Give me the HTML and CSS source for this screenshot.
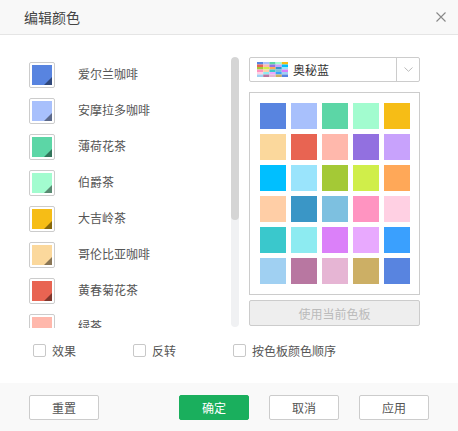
FILE: index.html
```html
<!DOCTYPE html>
<html lang="zh">
<head>
<meta charset="utf-8">
<title>编辑颜色</title>
<link rel="stylesheet" href="styles.css">
</head>
<body>
<div class="dialog">
  <div class="header">
    <span class="title">编辑颜色</span>
    <svg class="close" width="10" height="10" viewBox="0 0 10 10"><path d="M0.5 0.5L9.5 9.5M9.5 0.5L0.5 9.5" stroke="#888" stroke-width="1.1" fill="none"/></svg>
  </div>
  <div class="main">
    <div class="left">
      <div class="list">
        <div class="item"><span class="sw"><span class="fill c1"></span></span><span class="label">爱尔兰咖啡</span></div>
        <div class="item"><span class="sw"><span class="fill c2"></span></span><span class="label">安摩拉多咖啡</span></div>
        <div class="item"><span class="sw"><span class="fill c3"></span></span><span class="label">薄荷花茶</span></div>
        <div class="item"><span class="sw"><span class="fill c4"></span></span><span class="label">伯爵茶</span></div>
        <div class="item"><span class="sw"><span class="fill c5"></span></span><span class="label">大吉岭茶</span></div>
        <div class="item"><span class="sw"><span class="fill c6"></span></span><span class="label">哥伦比亚咖啡</span></div>
        <div class="item"><span class="sw"><span class="fill c7"></span></span><span class="label">黄春菊花茶</span></div>
        <div class="item"><span class="sw"><span class="fill c8"></span></span><span class="label">绿茶</span></div>
      </div>
      <div class="scrollbar"><div class="thumb"></div></div>
    </div>
    <div class="right">
      <div class="select">
        <div class="select-value">
          <svg class="pal" width="31" height="15" viewBox="0 0 30 15" preserveAspectRatio="none">
            <rect x="0" y="0" width="6" height="2.5" fill="#5884E0"/><rect x="6" y="0" width="6" height="2.5" fill="#A8C0FC"/><rect x="12" y="0" width="6" height="2.5" fill="#5CD6A6"/><rect x="18" y="0" width="6" height="2.5" fill="#A2FCCF"/><rect x="24" y="0" width="6" height="2.5" fill="#F6BD16"/>
            <rect x="0" y="2.5" width="6" height="2.5" fill="#E86452"/><rect x="6" y="2.5" width="6" height="2.5" fill="#FFB8AC"/><rect x="12" y="2.5" width="6" height="2.5" fill="#9270E0"/><rect x="18" y="2.5" width="6" height="2.5" fill="#C8A2FC"/><rect x="24" y="2.5" width="6" height="2.5" fill="#00BFFF"/>
            <rect x="0" y="5" width="6" height="2.5" fill="#A4C936"/><rect x="6" y="5" width="6" height="2.5" fill="#D0EE4A"/><rect x="12" y="5" width="6" height="2.5" fill="#FFA858"/><rect x="18" y="5" width="6" height="2.5" fill="#3A96C6"/><rect x="24" y="5" width="6" height="2.5" fill="#9AE4FC"/>
            <rect x="0" y="7.5" width="6" height="2.5" fill="#FF94C1"/><rect x="6" y="7.5" width="6" height="2.5" fill="#FFCEA6"/><rect x="12" y="7.5" width="6" height="2.5" fill="#3AC8CC"/><rect x="18" y="7.5" width="6" height="2.5" fill="#7DC0E0"/><rect x="24" y="7.5" width="6" height="2.5" fill="#DB80F9"/>
            <rect x="0" y="10" width="6" height="2.5" fill="#FFD0E3"/><rect x="6" y="10" width="6" height="2.5" fill="#8DEBF1"/><rect x="12" y="10" width="6" height="2.5" fill="#E8A9FE"/><rect x="18" y="10" width="6" height="2.5" fill="#3AA0FE"/><rect x="24" y="10" width="6" height="2.5" fill="#A0D0F2"/>
            <rect x="0" y="12.5" width="6" height="2.5" fill="#A0D0F2"/><rect x="6" y="12.5" width="6" height="2.5" fill="#B877A1"/><rect x="12" y="12.5" width="6" height="2.5" fill="#E6B5D4"/><rect x="18" y="12.5" width="6" height="2.5" fill="#CCAF65"/><rect x="24" y="12.5" width="6" height="2.5" fill="#5884E0"/>
          </svg>
          <span class="select-text">奥秘蓝</span>
        </div>
        <div class="select-arrow">
          <svg width="9" height="5" viewBox="0 0 9 5"><path d="M0.5 0.5L4.5 4.3L8.5 0.5" stroke="#bbb" stroke-width="1" fill="none"/></svg>
        </div>
      </div>
      <div class="grid">
        <span class="cell" style="background:#5884E0"></span>
        <span class="cell" style="background:#A8C0FC"></span>
        <span class="cell" style="background:#5CD6A6"></span>
        <span class="cell" style="background:#A2FCCF"></span>
        <span class="cell" style="background:#F6BD16"></span>
        <span class="cell" style="background:#FBD89C"></span>
        <span class="cell" style="background:#E86452"></span>
        <span class="cell" style="background:#FFB8AC"></span>
        <span class="cell" style="background:#9270E0"></span>
        <span class="cell" style="background:#C8A2FC"></span>
        <span class="cell" style="background:#00BFFF"></span>
        <span class="cell" style="background:#9AE4FC"></span>
        <span class="cell" style="background:#A4C936"></span>
        <span class="cell" style="background:#D0EE4A"></span>
        <span class="cell" style="background:#FFA858"></span>
        <span class="cell" style="background:#FFCEA6"></span>
        <span class="cell" style="background:#3A96C6"></span>
        <span class="cell" style="background:#7DC0E0"></span>
        <span class="cell" style="background:#FF94C1"></span>
        <span class="cell" style="background:#FFD0E3"></span>
        <span class="cell" style="background:#3AC8CC"></span>
        <span class="cell" style="background:#8DEBF1"></span>
        <span class="cell" style="background:#DB80F9"></span>
        <span class="cell" style="background:#E8A9FE"></span>
        <span class="cell" style="background:#3AA0FE"></span>
        <span class="cell" style="background:#A0D0F2"></span>
        <span class="cell" style="background:#B877A1"></span>
        <span class="cell" style="background:#E6B5D4"></span>
        <span class="cell" style="background:#CCAF65"></span>
        <span class="cell" style="background:#5884E0"></span>
      </div>
      <button class="use-btn" disabled>使用当前色板</button>
    </div>
  </div>
  <div class="options">
    <label class="opt"><span class="cb"></span><span>效果</span></label>
    <label class="opt"><span class="cb"></span><span>反转</span></label>
    <label class="opt"><span class="cb"></span><span>按色板颜色顺序</span></label>
  </div>
  <div class="footer">
    <button class="btn">重置</button>
    <div class="footer-right">
      <button class="btn primary">确定</button>
      <button class="btn">取消</button>
      <button class="btn">应用</button>
    </div>
  </div>
</div>
</body>
</html>
```

FILE: styles.css
```css
* { box-sizing: border-box; }
html, body { margin: 0; padding: 0; background: #fff; }
body {
  font-family: "Noto Sans CJK SC", "Liberation Sans", sans-serif;
  font-size: 12px;
  color: #555;
}
.dialog {
  width: 458px;
  height: 431px;
  display: flex;
  flex-direction: column;
  background: #fff;
}
.header {
  height: 35px;
  flex: none;
  background: #f8f8f8;
  border-bottom: 1px solid #e5e5e5;
  display: flex;
  align-items: center;
  justify-content: space-between;
  padding: 0 12px 0 24px;
}
.title { font-size: 14px; color: #444; line-height: 1; margin-top: -1px; }
.close { display: block; margin-top: -1px; }

.main {
  display: flex;
  padding: 21px 38px 0 29px;
  height: 293px;
  flex: none;
}
.left { display: flex; width: 210px; height: 272px; }
.list {
  width: 202px;
  height: 272px;
  overflow: hidden;
}
.item {
  height: 36px;
  display: flex;
  align-items: center;
}
.sw {
  width: 26px;
  height: 26px;
  border: 1px solid #ccc;
  border-radius: 2px;
  padding: 2px;
  background: #fff;
  flex: none;
  margin-top: 1px;
}
.fill {
  display: block;
  width: 20px;
  height: 20px;
  position: relative;
  overflow: hidden;
}
.fill::after {
  content: "";
  position: absolute;
  right: 0;
  bottom: 0;
  width: 0;
  height: 0;
  border-left: 8px solid transparent;
  border-bottom: 8px solid rgba(0,0,0,0.45);
}
.c1 { background: #5884E0; }
.c2 { background: #A8C0FC; }
.c3 { background: #5CD6A6; }
.c4 { background: #A2FCCF; }
.c5 { background: #F6BD16; }
.c6 { background: #FBD89C; }
.c7 { background: #E86452; }
.c8 { background: #FFB8AC; }
.label {
  margin-left: 23px;
  font-size: 12px;
  color: #555;
  line-height: 1;
}
.scrollbar {
  width: 8px;
  height: 270px;
  margin-top: 1px;
  border-radius: 4px;
  background: #f0f1f3;
  overflow: hidden;
}
.thumb {
  height: 163px;
  background: #d5d5d5;
  border-radius: 4px;
}

.right {
  width: 171px;
  margin-left: 10px;
  display: flex;
  flex-direction: column;
}
.select {
  height: 25px;
  margin-top: 1px;
  border: 1px solid #ccc;
  border-radius: 2px;
  display: flex;
}
.select-value {
  flex: 1;
  display: flex;
  align-items: center;
  padding-left: 7px;
}
.pal { display: block; }
.select-text { margin-left: 5px; color: #333; font-size: 12px; line-height: 1; }
.select-arrow {
  width: 23px;
  border-left: 1px solid #ccc;
  display: flex;
  align-items: center;
  justify-content: center;
}
.select-arrow svg { display: block; }
.grid {
  margin-top: 10px;
  height: 203px;
  border: 1px solid #ccc;
  padding: 10px 0 0 10px;
  display: grid;
  grid-template-columns: repeat(5, 26px);
  grid-auto-rows: 26px;
  gap: 5px;
}
.cell { display: block; width: 26px; height: 26px; }
.use-btn {
  margin-top: 5px;
  height: 26px;
  width: 171px;
  border: 1px solid #ccc;
  border-radius: 2px;
  background: #eee;
  color: #bbb;
  font-family: inherit;
  font-size: 12px;
  padding: 0;
}

.options {
  display: flex;
  padding: 16px 0 0 33px;
  height: 55px;
  flex: none;
}
.opt {
  width: 100px;
  flex: none;
  display: flex;
  align-items: center;
  height: 13px;
  color: #555;
  font-size: 12px;
  white-space: nowrap;
}
.opt:last-child { width: auto; }
.cb {
  width: 13px;
  height: 13px;
  border: 1px solid #c8c8c8;
  border-radius: 2px;
  background: #fff;
  margin-right: 6px;
  flex: none;
}

.footer {
  flex: 1;
  background: #f9f9f9;
  display: flex;
  align-items: flex-start;
  justify-content: space-between;
  padding: 12px 29px 0 29px;
}
.footer-right { display: flex; gap: 20px; }
.btn {
  width: 70px;
  height: 25px;
  border: 1px solid #ccc;
  border-radius: 2px;
  background: #fff;
  color: #555;
  font-family: inherit;
  font-size: 12px;
  padding: 0;
}
.btn.primary {
  background: #1aaf5d;
  border-color: #1aaf5d;
  color: #fff;
}
```
